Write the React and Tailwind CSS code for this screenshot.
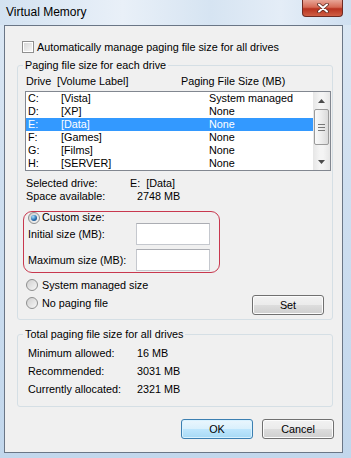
import React from "react";

const drives = [
  { letter: "C:", label: "[Vista]", size: "System managed" },
  { letter: "D:", label: "[XP]", size: "None" },
  { letter: "E:", label: "[Data]", size: "None", selected: true },
  { letter: "F:", label: "[Games]", size: "None" },
  { letter: "G:", label: "[Films]", size: "None" },
  { letter: "H:", label: "[SERVER]", size: "None" },
];

const totals = [
  ["Minimum allowed:", "16 MB"],
  ["Recommended:", "3031 MB"],
  ["Currently allocated:", "2321 MB"],
];

const Radio = ({ checked }) => (
  <span className="w-[12px] h-[12px] shrink-0 rounded-full border border-[#8e8f8f] bg-[linear-gradient(135deg,#cfcfcf,#f7f7f7)] flex items-center justify-center">
    {checked && (
      <span className="w-[6px] h-[6px] rounded-full bg-[radial-gradient(circle_at_35%_30%,#a8e4ff,#2a6fb0_55%,#123e70)]" />
    )}
  </span>
);

const Button = ({ children, primary }) => (
  <button
    className={
      primary
        ? "w-[72px] h-[20px] rounded-[3px] border border-[#3c7fb1] shadow-[inset_0_0_0_1px_#d9f2ff] bg-[linear-gradient(#eaf6fd_0%,#d9f0fc_50%,#bee6fd_51%,#a7d9f5_100%)] leading-none"
        : "w-[72px] h-[20px] rounded-[3px] border border-[#707070] shadow-[inset_0_0_0_1px_#fcfcfc] bg-[linear-gradient(#f2f2f2_0%,#ebebeb_50%,#dddddd_51%,#cfcfcf_100%)] leading-none"
    }
  >
    {children}
  </button>
);

const Arrow = ({ up }) => (
  <svg width="7" height="4" viewBox="0 0 7 4">
    <path d={up ? "M0 4L3.5 0L7 4Z" : "M0 0L3.5 4L7 0Z"} fill="#4d4d4d" />
  </svg>
);

export default function App() {
  return (
    <div className="w-[351px] h-[458px] overflow-hidden flex flex-col bg-[linear-gradient(180deg,#dce8f4_0%,#cfdff0_40%,#c2d7ec_100%)] font-['Liberation_Sans',Arial,sans-serif] text-[10.8px] text-black">
      {/* title bar */}
      <div className="h-[25px] shrink-0 flex items-start justify-between bg-[linear-gradient(90deg,#d3e2f1_0%,#e9f0f8_35%,#d6e4f2_60%,#e4edf7_80%,#cfdff0_100%)]">
        <span className="pl-[6px] pt-[4px] text-[12px] leading-[16px]">Virtual Memory</span>
        <div className="mr-[8px] w-[41px] h-[17px] rounded-b-[4px] border border-t-0 border-[#6e2a22] bg-[linear-gradient(#e8a597_0%,#d66a55_45%,#b8321f_55%,#cf5f45_100%)] flex items-center justify-center">
          <svg width="12" height="10" viewBox="0 0 12 10">
            <path d="M2 1.5L10 8.5M10 1.5L2 8.5" stroke="#5a2a22" strokeWidth="3.6" strokeLinecap="round" />
            <path d="M2 1.5L10 8.5M10 1.5L2 8.5" stroke="#ffffff" strokeWidth="2" strokeLinecap="round" />
          </svg>
        </div>
      </div>

      {/* client area */}
      <div className="ml-[4px] w-[339px] h-[428px] shrink-0 border border-[#6a7686] bg-[#f0f0f0] flex flex-col">
        <label className="mt-[15px] ml-[17px] h-[12px] flex items-center gap-[3px]">
          <span className="w-[12px] h-[12px] border border-[#8f8f8f] bg-white p-[1px] flex">
            <span className="flex-1 bg-[linear-gradient(135deg,#d8d8d8,#f6f6f6)]" />
          </span>
          <span className="leading-[12px]">Automatically manage paging file size for all drives</span>
        </label>

        {/* paging file size for each drive */}
        <fieldset className="mt-[5px] ml-[12px] w-[316px] h-[262px] border border-[#d5dfe5] rounded-[3px]">
          <legend className="ml-[5px] px-[2px] leading-[14px]">Paging file size for each drive</legend>
          <div className="mt-[2px] pl-[8px] h-[14px] flex items-center">
            <span className="w-[31px]">Drive</span>
            <span className="w-[124px]">[Volume Label]</span>
            <span>Paging File Size (MB)</span>
          </div>

          <div className="mt-[3px] ml-[7px] w-[306px] h-[80px] border border-[#828790] bg-white flex">
            <div className="flex-1 flex flex-col">
              {drives.map((d) => (
                <div
                  key={d.letter}
                  className={
                    d.selected
                      ? "h-[13px] pl-[2px] flex items-center bg-[#3399ff] text-white"
                      : "h-[13px] pl-[2px] flex items-center"
                  }
                >
                  <span className="w-[33px]">{d.letter}</span>
                  <span className="w-[148px]">{d.label}</span>
                  <span>{d.size}</span>
                </div>
              ))}
            </div>
            <div className="w-[17px] flex flex-col bg-[linear-gradient(90deg,#e6e6e6,#f4f4f4_40%,#f4f4f4_60%,#e6e6e6)]">
              <div className="h-[17px] flex items-center justify-center">
                <Arrow up />
              </div>
              <div className="h-[36px] mx-[1px] rounded-[2px] border border-[#9a9a9a] bg-[linear-gradient(90deg,#fafafa,#ececec_50%,#dadada)] flex flex-col items-center justify-center gap-[2px]">
                <span className="w-[7px] h-[1px] bg-[#777]" />
                <span className="w-[7px] h-[1px] bg-[#777]" />
                <span className="w-[7px] h-[1px] bg-[#777]" />
              </div>
              <div className="flex-1" />
              <div className="h-[17px] flex items-center justify-center">
                <Arrow />
              </div>
            </div>
          </div>

          <div className="mt-[6px] pl-[8px] flex flex-col">
            <div className="h-[13px] flex items-center">
              <span className="w-[104px]">Selected drive:</span>
              <span>E:&nbsp;&nbsp;[Data]</span>
            </div>
            <div className="h-[13px] flex items-center">
              <span className="w-[111px]">Space available:</span>
              <span>2748 MB</span>
            </div>
          </div>

          {/* custom size, highlighted */}
          <div className="mt-[8px] ml-[5px] w-[197px] h-[62px] rounded-[9px] border border-[#c8384e] flex flex-col">
            <div className="h-[11px] ml-[4px] flex items-center gap-[2px]">
              <Radio checked />
              <span>Custom size:</span>
            </div>
            <div className="h-[22px] ml-[4px] flex items-center">
              <span className="w-[108px]">Initial size (MB):</span>
              <span className="w-[74px] h-[22px] bg-white border border-[#c5c8ce] border-t-[#abadb3]" />
            </div>
            <div className="mt-[4px] h-[22px] ml-[4px] flex items-center">
              <span className="w-[108px]">Maximum size (MB):</span>
              <span className="w-[74px] h-[22px] bg-white border border-[#c5c8ce] border-t-[#abadb3]" />
            </div>
          </div>

          <div className="mt-[6px] ml-[8px] h-[12px] flex items-center gap-[4px]">
            <Radio />
            <span>System managed size</span>
          </div>
          <div className="mt-[4px] ml-[8px] mr-[8px] h-[20px] flex items-start justify-between">
            <div className="mt-[2px] h-[12px] flex items-center gap-[4px]">
              <Radio />
              <span>No paging file</span>
            </div>
            <Button>Set</Button>
          </div>
        </fieldset>

        {/* totals */}
        <fieldset className="mt-[7px] ml-[12px] w-[316px] h-[80px] border border-[#d5dfe5] rounded-[3px]">
          <legend className="ml-[5px] px-[2px] leading-[14px]">Total paging file size for all drives</legend>
          <div className="mt-[3px] pl-[10px] flex flex-col">
            {totals.map(([k, v]) => (
              <div key={k} className="h-[18px] flex items-center">
                <span className="w-[109px]">{k}</span>
                <span>{v}</span>
              </div>
            ))}
          </div>
        </fieldset>

        <div className="mt-[12px] mr-[8px] flex justify-end gap-[9px]">
          <Button primary>OK</Button>
          <Button>Cancel</Button>
        </div>
      </div>
    </div>
  );
}
